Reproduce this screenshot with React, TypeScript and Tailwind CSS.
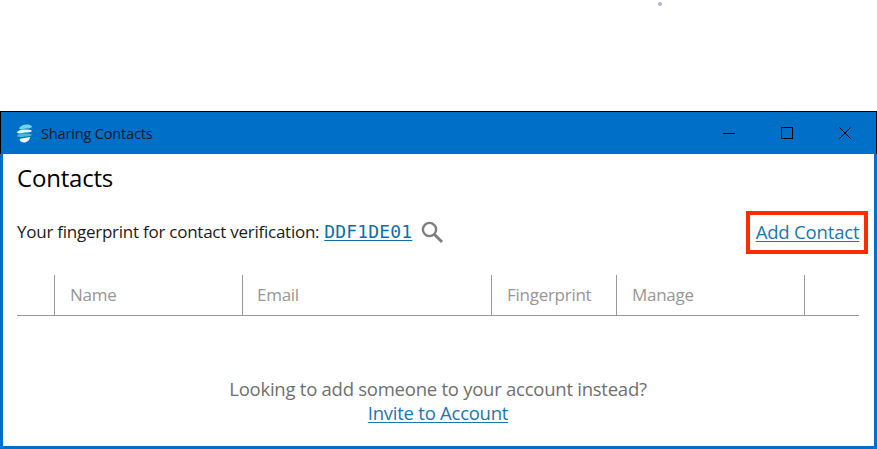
import React from "react";

const Logo = () => (
  <svg width="17" height="19" viewBox="0 0 17 19">
    <path d="M3 4.5 C4 2 8 0.5 11 0.5 C13 0.5 15 1 16 2.5 C15.5 4.8 12 4.2 9 4.8 C7 5.2 4.5 6 3 4.5Z" fill="#73d3e6" />
    <path d="M1 8.5 C2 6 6 5.6 9 5.6 C12 5.6 15 5.6 16 7 C14.5 8.8 11 8.2 8 8.8 C6 9.2 2.5 10.2 1 8.5Z" fill="#dff6f9" />
    <path d="M1 12 C1.5 10 6 9.6 9 9.6 C11 9.6 14.5 9.6 16 11 C14 12.8 11 12.2 8 12.8 C6 13.2 2.5 13.6 1 12Z" fill="#3fbcd8" />
    <path d="M3.5 15.5 C6 13.5 10 14.2 14 13 C14 16 11 18.5 8 18.5 C6 18.5 4 17.2 3.5 15.5Z" fill="#eafafc" />
  </svg>
);

const columns = [
  { label: "", w: "w-[38px]", pad: "pl-[15px]" },
  { label: "Name", w: "w-[188px]", pad: "pl-[15px]" },
  { label: "Email", w: "w-[249px]", pad: "pl-[14px]" },
  { label: "Fingerprint", w: "w-[125px]", pad: "pl-[15px]" },
  { label: "Manage", w: "w-[188px]", pad: "pl-[15px]" },
];

export default function App() {
  return (
    <div className="relative h-[449px] w-[877px] overflow-hidden bg-white font-['Open_Sans','Noto_Sans',sans-serif]">
      <div className="absolute left-[658px] top-[2px] h-[4px] w-[4px] rounded-full bg-[#b5aee0]" />
      <div className="h-[111px]" />
      <div className="flex h-[338px] flex-col border-x-[3px] border-b-[3px] border-[#006fc7] border-t-0">
        <div className="-mx-[3px] flex h-[43px] items-center border-x border-t border-x-black border-t-black bg-[#006fc7] pl-[15px]">
          <Logo />
          <span className="ml-[8px] text-[14.6px] leading-none tracking-[-0.2px] text-[#0c1a2a]">Sharing Contacts</span>
          <div className="ml-auto flex h-full items-center">
            <svg width="14" height="14" viewBox="0 0 14 14" className="mr-[44px]">
              <path d="M1 7.5H13" stroke="#000" strokeWidth="1" />
            </svg>
            <svg width="14" height="14" viewBox="0 0 14 14" className="mr-[44px]">
              <rect x="1.5" y="1.5" width="11" height="11" fill="none" stroke="#000" strokeWidth="1" />
            </svg>
            <svg width="14" height="14" viewBox="0 0 14 14" className="mr-[24px]">
              <path d="M1.5 1.5L12.5 12.5M12.5 1.5L1.5 12.5" stroke="#000" strokeWidth="1" />
            </svg>
          </div>
        </div>
        <div className="flex flex-1 flex-col pl-[14px] pr-[15px]">
          <h1 className="mt-[8px] text-[24px] leading-[32px] tracking-[-0.2px] text-black">Contacts</h1>
          <div className="mt-[17px] flex h-[43px] items-center justify-between">
            <div className="mb-[2px] flex items-center text-[17px] tracking-[-0.25px] text-[#1a1a1a]">
              <span>Your fingerprint for contact verification:</span>
              <a className="ml-[5px] font-['DejaVu_Sans_Mono',monospace] text-[18px] tracking-[0.16px] text-[#0f6ea6] underline underline-offset-2">DDF1DE01</a>
              <svg width="24" height="24" viewBox="0 0 24 24" className="ml-[8px]">
                <circle cx="9.5" cy="9.5" r="6.6" fill="none" stroke="#7f7f7f" strokeWidth="2.4" />
                <path d="M14.5 14.5L22 22" stroke="#7f7f7f" strokeWidth="3" />
              </svg>
            </div>
            <div className="-mr-[9px] flex h-[43px] w-[122px] items-center justify-center border-[4px] border-[#fb2c00] pb-[2px] pl-[1px]">
              <a className="whitespace-nowrap text-[18.5px] tracking-[-0.17px] text-[#1d76ab] underline underline-offset-2">Add Contact</a>
            </div>
          </div>
          <div className="mt-[21px] flex h-[41px] items-stretch border-b border-[#999999]">
            {columns.map((c) => (
              <div key={c.label} className={`${c.w} ${c.pad} flex items-center border-r border-[#999999] text-[17px] tracking-[-0.27px] text-[#969696]`}>
                {c.label}
              </div>
            ))}
          </div>
          <div className="mt-[61px] flex flex-col items-center text-[18.5px] leading-[24px] tracking-[-0.25px]">
            <p className="text-[#6f6f6f]">Looking to add someone to your account instead?</p>
            <a className="text-[#1d76ab] underline underline-offset-2">Invite to Account</a>
          </div>
        </div>
      </div>
    </div>
  );
}
